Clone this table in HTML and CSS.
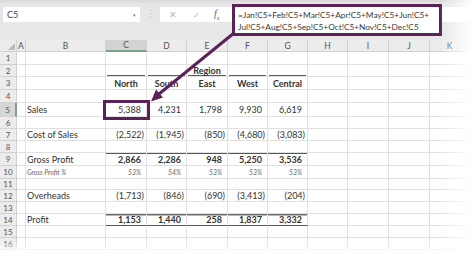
FILE: index.html
```html
<!DOCTYPE html>
<html>
<head>
<meta charset="utf-8">
<link rel="stylesheet" href="styles.css">
</head>
<body>
<div class="app">
  <div class="toolbar">
    <div class="namebox"><span>C5</span><span class="caret">▾</span></div>
    <div class="sep">⋮</div>
    <div class="fxarea">
      <div class="icons">
        <span class="ico x">✕</span>
        <span class="ico ok">✓</span>
        <span class="ico fx">f<sub>x</sub></span>
      </div>
      <div class="formula">=Jan!C5+Feb!C5+Mar!C5+Apr!C5+May!C5+Jun!C5+<br>Jul!C5+Aug!C5+Sep!C5+Oct!C5+Nov!C5+Dec!C5</div>
    </div>
  </div>

  <div class="sheet">
    <div class="row hdr h12">
      <div class="corner"><span class="tri"></span></div>
      <div class="ch">A</div><div class="ch">B</div><div class="ch sel">C</div><div class="ch">D</div><div class="ch">E</div><div class="ch">F</div><div class="ch">G</div><div class="ch">H</div><div class="ch">I</div><div class="ch">J</div><div class="ch">K</div><div class="ch"></div>
    </div>

    <div class="row h13"><div class="rh">1</div><div class="c"></div><div class="c"></div><div class="c"></div><div class="c"></div><div class="c"></div><div class="c"></div><div class="c"></div><div class="c"></div><div class="c"></div><div class="c"></div><div class="c"></div><div class="c"></div></div>

    <div class="row h12"><div class="rh">2</div><div class="c"></div><div class="c"></div><div class="c ul"></div><div class="c ul"></div><div class="c ul ctr b">Region</div><div class="c ul"></div><div class="c ul"></div><div class="c"></div><div class="c"></div><div class="c"></div><div class="c"></div><div class="c"></div></div>

    <div class="row h13"><div class="rh">3</div><div class="c"></div><div class="c"></div><div class="c ctr b">North</div><div class="c ctr b">South</div><div class="c ctr b">East</div><div class="c ctr b">West</div><div class="c ctr b">Central</div><div class="c"></div><div class="c"></div><div class="c"></div><div class="c"></div><div class="c"></div></div>

    <div class="row h13"><div class="rh">4</div><div class="c"></div><div class="c"></div><div class="c"></div><div class="c"></div><div class="c"></div><div class="c"></div><div class="c"></div><div class="c"></div><div class="c"></div><div class="c"></div><div class="c"></div><div class="c"></div></div>

    <div class="row h14"><div class="rh rsel">5</div><div class="c"></div><div class="c lbl">Sales</div><div class="c n p active">5,388</div><div class="c n p">4,231</div><div class="c n p">1,798</div><div class="c n p">9,930</div><div class="c n p">6,619</div><div class="c"></div><div class="c"></div><div class="c"></div><div class="c"></div><div class="c"></div></div>

    <div class="row h12"><div class="rh">6</div><div class="c"></div><div class="c"></div><div class="c"></div><div class="c"></div><div class="c"></div><div class="c"></div><div class="c"></div><div class="c"></div><div class="c"></div><div class="c"></div><div class="c"></div><div class="c"></div></div>

    <div class="row h12"><div class="rh">7</div><div class="c"></div><div class="c lbl">Cost of Sales</div><div class="c n">(2,522)</div><div class="c n">(1,945)</div><div class="c n">(850)</div><div class="c n">(4,680)</div><div class="c n">(3,083)</div><div class="c"></div><div class="c"></div><div class="c"></div><div class="c"></div><div class="c"></div></div>

    <div class="row h12"><div class="rh">8</div><div class="c"></div><div class="c"></div><div class="c"></div><div class="c"></div><div class="c"></div><div class="c"></div><div class="c"></div><div class="c"></div><div class="c"></div><div class="c"></div><div class="c"></div><div class="c"></div></div>

    <div class="row h13"><div class="rh">9</div><div class="c"></div><div class="c lbl">Gross Profit</div><div class="c n p b tl">2,866</div><div class="c n p b tl">2,286</div><div class="c n p b tl">948</div><div class="c n p b tl">5,250</div><div class="c n p b tl">3,536</div><div class="c"></div><div class="c"></div><div class="c"></div><div class="c"></div><div class="c"></div></div>

    <div class="row h13"><div class="rh">10</div><div class="c"></div><div class="c lbl pct">Gross Profit %</div><div class="c n p pct">53%</div><div class="c n p pct">54%</div><div class="c n p pct">53%</div><div class="c n p pct">53%</div><div class="c n p pct">53%</div><div class="c"></div><div class="c"></div><div class="c"></div><div class="c"></div><div class="c"></div></div>

    <div class="row h11"><div class="rh">11</div><div class="c"></div><div class="c"></div><div class="c"></div><div class="c"></div><div class="c"></div><div class="c"></div><div class="c"></div><div class="c"></div><div class="c"></div><div class="c"></div><div class="c"></div><div class="c"></div></div>

    <div class="row h12"><div class="rh">12</div><div class="c"></div><div class="c lbl">Overheads</div><div class="c n">(1,713)</div><div class="c n">(846)</div><div class="c n">(690)</div><div class="c n">(3,413)</div><div class="c n">(204)</div><div class="c"></div><div class="c"></div><div class="c"></div><div class="c"></div><div class="c"></div></div>

    <div class="row h12"><div class="rh">13</div><div class="c"></div><div class="c"></div><div class="c"></div><div class="c"></div><div class="c"></div><div class="c"></div><div class="c"></div><div class="c"></div><div class="c"></div><div class="c"></div><div class="c"></div><div class="c"></div></div>

    <div class="row h12"><div class="rh">14</div><div class="c"></div><div class="c lbl">Profit</div><div class="c n p b tot">1,153</div><div class="c n p b tot">1,440</div><div class="c n p b tot">258</div><div class="c n p b tot">1,837</div><div class="c n p b tot">3,332</div><div class="c"></div><div class="c"></div><div class="c"></div><div class="c"></div><div class="c"></div></div>

    <div class="row h12"><div class="rh">15</div><div class="c"></div><div class="c"></div><div class="c"></div><div class="c"></div><div class="c"></div><div class="c"></div><div class="c"></div><div class="c"></div><div class="c"></div><div class="c"></div><div class="c"></div><div class="c"></div></div>

    <div class="row h12"><div class="rh">16</div><div class="c"></div><div class="c"></div><div class="c"></div><div class="c"></div><div class="c"></div><div class="c"></div><div class="c"></div><div class="c"></div><div class="c"></div><div class="c"></div><div class="c"></div><div class="c"></div></div>
  </div>

  <svg class="arrow" width="474" height="259" viewBox="0 0 474 259">
    <line x1="234" y1="33" x2="159" y2="94" stroke="#5c2159" stroke-width="3"/>
    <polygon points="151,101.5 163,97.5 156,89.5" fill="#5c2159"/>
  </svg>
  <div class="fade"></div>
</div>
</body>
</html>
```
FILE: styles.css
```css
html, body {
  margin: 0;
  padding: 0;
  background: #fff;
}
.app {
  position: relative;
  width: 474px;
  height: 259px;
  overflow: hidden;
  font-family: "Lato", "Liberation Sans", sans-serif;
  color: #333;
}
.toolbar {
  height: 40px;
  display: flex;
  align-items: flex-start;
  background: linear-gradient(#d9d9d9 0, #e6e6e6 4px, #e8e8e8 100%);
}
.namebox {
  margin: 7px 0 0 3px;
  width: 137px;
  height: 15px;
  box-sizing: border-box;
  background: #fff;
  display: flex;
  align-items: center;
  justify-content: space-between;
  padding: 0 4px 0 4px;
  font-size: 9px;
  color: #444;
}
.caret {
  font-size: 5px;
  color: #777;
}
.sep {
  width: 20px;
  margin-top: 8px;
  text-align: center;
  font-size: 9px;
  line-height: 12px;
  color: #bbb;
}
.fxarea {
  flex: 1;
  margin-top: 7px;
  height: 15px;
  background: #fff;
  display: flex;
  align-items: flex-start;
}
.icons {
  width: 72px;
  height: 15px;
  display: flex;
  align-items: center;
  padding-left: 9px;
  box-sizing: border-box;
}
.ico {
  font-size: 9px;
  color: #b5b5b5;
}
.ico.x { width: 24px; }
.ico.ok { width: 21px; font-size: 8px; }
.ico.fx {
  font-family: "Liberation Serif", serif;
  font-style: italic;
  color: #666;
  font-size: 10px;
}
.ico.fx sub { font-size: 6px; }
.formula {
  margin-top: -3px;
  width: 210px;
  height: 32px;
  box-sizing: border-box;
  border: 3px solid #5c2159;
  background: #fff;
  padding: 2px 0 0 3px;
  font-size: 8.3px;
  line-height: 12px;
  color: #3a3a3a;
  white-space: nowrap;
  position: relative;
  z-index: 1;
}
.sheet {
  display: flex;
  flex-direction: column;
}
.row {
  display: grid;
  grid-template-columns: 17px 9px 80px 41px 40px 41px 40px 40px 40px 41px 41px 40px 1fr;
  font-size: 9px;
}
.h11 { height: 11px; }
.h12 { height: 12px; }
.h13 { height: 13px; }
.h14 { height: 14px; }
.row > div {
  box-sizing: border-box;
  border-right: 1px solid #e0e0e0;
  border-bottom: 1px solid #e0e0e0;
  display: flex;
  align-items: center;
  white-space: nowrap;
  min-width: 0;
}
.hdr {
  background: #ececec;
}
.hdr > div {
  border-right-color: #d2d2d2;
  border-bottom-color: #d2d2d2;
  justify-content: center;
  color: #555;
  font-size: 8.5px;
}
.hdr .ch.sel {
  background: #d3d3d3;
  border-bottom: 2px solid #79a386;
}
.corner {
  position: relative;
}
.tri {
  position: absolute;
  right: 1px;
  bottom: 1px;
  width: 0;
  height: 0;
  border-left: 7px solid transparent;
  border-bottom: 7px solid #bcbcbc;
}
.row > .rh {
  background: #ececec;
  border-right-color: #d2d2d2;
  border-bottom-color: #d2d2d2;
  justify-content: center;
  color: #555;
  font-size: 8px;
}
.row > .rh.rsel {
  background: #d6d6d6;
  color: #2f6e48;
  border-right: 2px solid #79a386;
}
.ctr { justify-content: center; overflow: visible; }
.b { font-weight: bold; }
.row > .lbl {
  padding-left: 1px;
  overflow: visible;
}
.row > .n {
  justify-content: flex-end;
  padding-right: 2px;
}
.row > .n.p {
  padding-right: 5px;
}
.pct {
  font-size: 6.8px;
  font-style: italic;
  color: #666;
}
.row > .ul {
  background: linear-gradient(#5e5e5e, #5e5e5e) no-repeat 1px 100% / calc(100% - 2px) 1px;
}
.row > .tl {
  box-shadow: inset 0 1px 0 #555;
}
.row > .tot {
  box-shadow: inset 0 1.5px 0 #6a6a6a;
  border-bottom: 1px solid #555;
}
.row > .active {
  outline: 3px solid #5c2159;
  outline-offset: 0;
  position: relative;
  z-index: 2;
}
.arrow {
  position: absolute;
  left: 0;
  top: 0;
  z-index: 3;
}
.fade {
  position: absolute;
  inset: 0;
  z-index: 4;
  pointer-events: none;
  background:
    linear-gradient(to right, rgba(255,255,255,0) 440px, #fff 472px),
    linear-gradient(to bottom, rgba(255,255,255,0) 240px, #fff 254px);
}
```
